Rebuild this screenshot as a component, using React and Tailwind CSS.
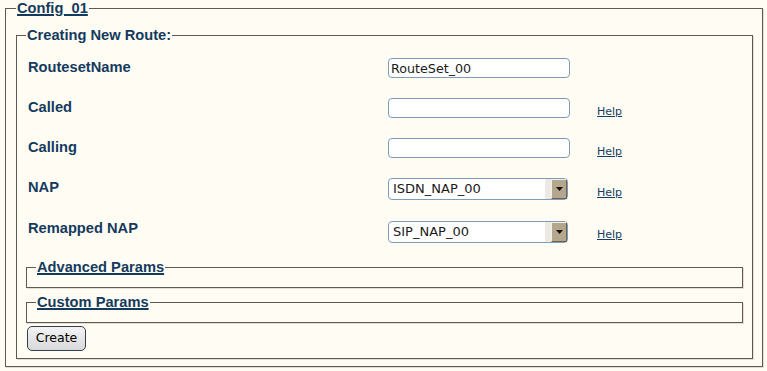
import { useState } from "react";

const sans = { fontFamily: '"Liberation Sans", Arial, sans-serif' };
const deja = { fontFamily: '"DejaVu Sans", Verdana, sans-serif' };

const rows = [
  { label: "RoutesetName", kind: "text", value: "RouteSet_00", h: "h-[40px]", lt: "mt-[7px]", it: "mt-[6px]" },
  { label: "Called", kind: "text", value: "", h: "h-[40px]", lt: "mt-[7px]", it: "mt-[6px]", help: "mt-[13px]" },
  { label: "Calling", kind: "text", value: "", h: "h-[40px]", lt: "mt-[7px]", it: "mt-[6px]", help: "mt-[13px]" },
  { label: "NAP", kind: "select", value: "ISDN_NAP_00", h: "h-[42px]", lt: "mt-[7px]", it: "mt-[6px]", help: "mt-[14px]" },
  { label: "Remapped NAP", kind: "select", value: "SIP_NAP_00", h: "h-[42px]", lt: "mt-[6px]", it: "mt-[7px]", help: "mt-[14px]" },
];

function NapSelect({ value }) {
  const [v, setV] = useState(value);
  return (
    <div className="relative w-[180px] h-[22px]">
      <select
        value={v}
        onChange={(e) => setV(e.target.value)}
        style={deja}
        className="block appearance-none w-full h-full rounded-[4px] border border-[#7f9db9] bg-white pl-[4px] text-[13px] text-[#1a1a1a] outline-none"
      >
        <option>{value}</option>
      </select>
      <span className="pointer-events-none absolute right-[17px] top-[1px] bottom-[1px] w-[6px] bg-[#ece9e4]" />
      <span className="pointer-events-none absolute right-[1px] top-[1px] bottom-[1px] w-[16px] flex items-center justify-center bg-[#b5a68e] border-t border-l border-t-[#f4f0e8] border-l-[#f4f0e8] border-r border-b border-r-[#6e6252] border-b-[#6e6252]">
        <svg width="7" height="4" viewBox="0 0 7 4"><path d="M0 0h7L3.5 4z" fill="#111" /></svg>
      </span>
    </div>
  );
}

function Sub({ title }) {
  return (
    <fieldset className="border border-[#5f5950] shadow-[1px_1px_0_#e4ded2] pl-[9px] pb-[11px]">
      <legend className="px-[1px] leading-[17px] text-[14.67px] font-bold text-[#143a5e]" style={sans}>
        <a href="#" className="underline decoration-2 underline-offset-[1px]">{title}</a>
      </legend>
    </fieldset>
  );
}

export default function App() {
  return (
    <div className="h-[371px] bg-[#fffcf3] pl-[5px] pr-[4px]">
      <fieldset className="border border-[#5f5950] shadow-[1px_1px_0_#e4ded2] pl-[10px] pr-[9px] pt-[10px] pb-[7px]">
        <legend className="px-[1px] leading-[17px] text-[14.67px] font-bold text-[#143a5e]" style={sans}>
          <a href="#" className="underline decoration-2 underline-offset-[1px]">Config_01</a>
        </legend>
        <fieldset className="border border-[#5f5950] shadow-[1px_1px_0_#e4ded2] pl-[9px] pr-[9px] pt-[8px] pb-[7px]">
          <legend className="px-[1px] leading-[17px] text-[14.67px] font-bold text-[#143a5e]" style={sans}>
            Creating New Route:
          </legend>
          <div className="pl-[2px]">
            {rows.map((r) => (
              <div key={r.label} className={`grid grid-cols-[360px_209px_1fr] items-start ${r.h}`}>
                <div className={`${r.lt} leading-[17px] text-[14.67px] font-bold text-[#143a5e]`} style={sans}>{r.label}</div>
                <div className={r.it}>
                  {r.kind === "text" ? (
                    <input
                      defaultValue={r.value}
                      style={deja}
                      className="block w-[182px] h-[20px] rounded-[4px] border border-[#7f9db9] bg-white px-[2px] text-[12.7px] text-[#1a1a1a] outline-none"
                    />
                  ) : (
                    <NapSelect value={r.value} />
                  )}
                </div>
                <div className={`${r.help || ""} leading-[13px]`}>
                  {r.help && (
                    <a href="#" style={deja} className="block w-fit leading-[13px] text-[11px] text-[#173d66] underline">Help</a>
                  )}
                </div>
              </div>
            ))}
          </div>
          <div className="mt-[3px]"><Sub title="Advanced Params" /></div>
          <div className="mt-[6px]"><Sub title="Custom Params" /></div>
          <button
            style={deja}
            className="mt-[3px] ml-[1px] block w-[59px] h-[25px] rounded-[5px] border border-[#34404c] bg-linear-to-b from-[#f3f3f3] to-[#d9d9d9] text-[12.5px] text-black"
          >
            Create
          </button>
        </fieldset>
      </fieldset>
    </div>
  );
}
